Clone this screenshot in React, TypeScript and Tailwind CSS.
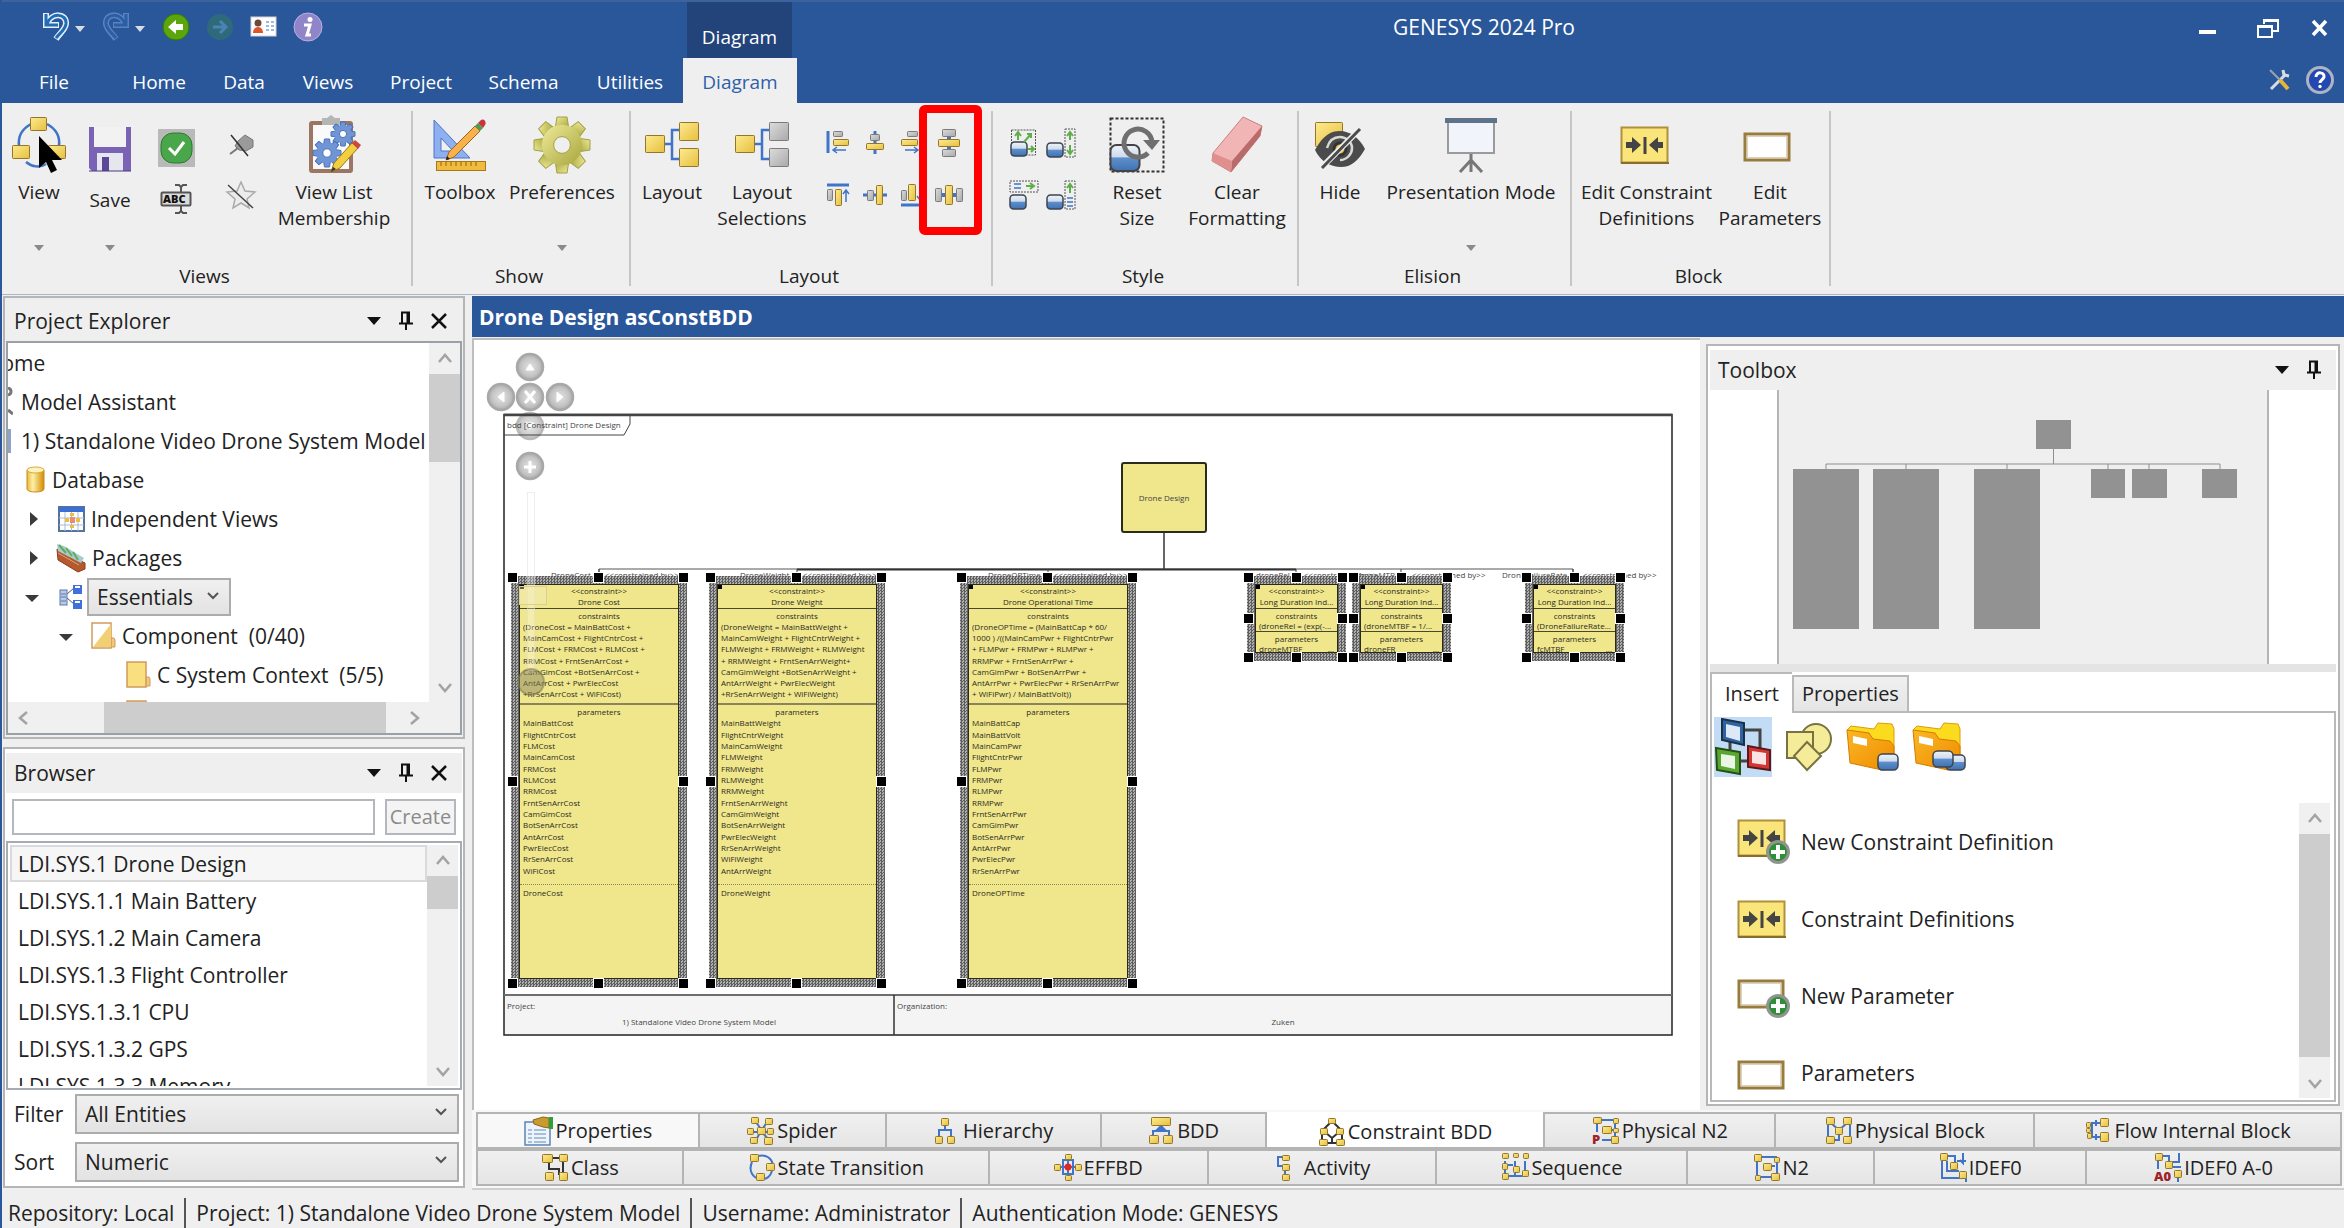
import { FC, ReactNode } from 'react';

interface BoxProps {
  x: number;
  y: number;
  w?: number;
  h?: number;
  gray?: boolean;
}

const Box: FC<BoxProps> = ({ x, y, w = 8, h = w, gray }) => (
  <rect
    x={x + 0.5}
    y={y + 0.5}
    width={w - 1}
    height={h - 1}
    rx={0.8}
    fill={gray ? 'url(#silver)' : 'url(#gold)'}
    stroke={gray ? '#7b7b7b' : '#94762a'}
  />
);

interface IconProps {
  w: number;
  h: number;
  children: ReactNode;
}

const Icon: FC<IconProps> = ({ w, h, children }) => (
  <svg width={w} height={h} viewBox={`0 0 ${w} ${h}`} fill="none" aria-hidden="true" className="shrink-0">
    {children}
  </svg>
);

const Gradients = () => (
  <svg width="0" height="0" className="absolute" aria-hidden="true">
    <defs>
      <linearGradient id="gold" x1="0" y1="0" x2="1" y2="1">
        <stop offset="0" stopColor="#fdeb8e" />
        <stop offset="1" stopColor="#e6bf3f" />
      </linearGradient>
      <linearGradient id="silver" x1="0" y1="0" x2="1" y2="1">
        <stop offset="0" stopColor="#dcdcdc" />
        <stop offset="1" stopColor="#a9a9a9" />
      </linearGradient>
      <linearGradient id="drum" x1="0" y1="0" x2="0" y2="1">
        <stop offset="0" stopColor="#eef3f9" />
        <stop offset="0.45" stopColor="#cddcee" />
        <stop offset="0.5" stopColor="#5f8fca" />
        <stop offset="1" stopColor="#3f72b4" />
      </linearGradient>
      <linearGradient id="folder" x1="0" y1="0" x2="1" y2="1">
        <stop offset="0" stopColor="#fbb725" />
        <stop offset="1" stopColor="#ee8c00" />
      </linearGradient>
      <linearGradient id="cylinder">
        <stop offset="0" stopColor="#e9b93c" />
        <stop offset="0.35" stopColor="#fdf0a6" />
        <stop offset="1" stopColor="#d48b00" />
      </linearGradient>
      <linearGradient id="olive" x1="0" y1="0" x2="1" y2="1">
        <stop offset="0" stopColor="#eeea9a" />
        <stop offset="1" stopColor="#a8a63c" />
      </linearGradient>
      <radialGradient id="knob">
        <stop offset="0" stopColor="#e3e3e3" />
        <stop offset="0.7" stopColor="#c4c4c4" />
        <stop offset="1" stopColor="#a9a9a9" />
      </radialGradient>
    </defs>
  </svg>
);

/* ---------- ribbon icons ---------- */

const ViewIcon = () => (
  <Icon w={54} h={58}>
    <path d="M19 8C8 14 6 22 7 30M35 8c11 6 13 14 12 22M14 46c6 5 14 6 20 2" stroke="#3f74c8" strokeWidth="2.5" />
    <Box x={18} y={1} w={17} h={14} />
    <Box x={0} y={29} w={18} h={14} />
    <Box x={36} y={29} w={18} h={14} />
    <path d="M27 20v32l7-6 5 11 6-3-5-10h10z" fill="#000" />
  </Icon>
);

const SaveIcon = () => (
  <Icon w={44} h={46}>
    <path d="M1 1h42v44H4l-3-3z" fill="#7a63b4" />
    <path d="M6 1h32v20H6z" fill="#f2f2f2" />
    <path d="M9 27h26v18H9z" fill="#e6e6ee" />
    <path d="M14 31h7v14h-7z" fill="#5b4698" />
    <path d="M1 45h42" stroke="#4b3a80" />
  </Icon>
);

const CheckIcon = () => (
  <Icon w={37} h={38}>
    <path d="M0 0h37v38H0z" fill="#b9b9b9" />
    <rect x="3" y="4" width="31" height="30" rx="12" fill="#4aa64a" stroke="#2b7a2f" />
    <path d="M11 19l6 6 9-12" stroke="#fff" strokeWidth="3" />
  </Icon>
);

const RenameIcon = () => (
  <Icon w={32} h={30}>
    <rect x="1.5" y="8.5" width="29" height="13" rx="1" fill="#dcdcdc" stroke="#555" strokeWidth="2" />
    <text x="3" y="19" fontSize="11" fontWeight="800" fill="#111" fontFamily="Open Sans, sans-serif">
      ABC
    </text>
    <path d="M15 1h4l2 2 2-2h4M21 3v6M21 22v5M15 29h4l2-2 2 2h4" stroke="#555" strokeWidth="2" />
  </Icon>
);

const UnpinIcon = () => (
  <Icon w={26} h={24}>
    <path d="M10 7l7-6 8 5v7l-7 4-7-1-4-4z" fill="#9a9a9a" stroke="#777" />
    <path d="M10 14l-8 6" stroke="#777" strokeWidth="2" />
    <path d="M3 1l17 21" stroke="#333" strokeWidth="1.5" />
  </Icon>
);

const UnstarIcon = () => (
  <Icon w={32} h={30}>
    <path d="M16 2l4 9 10 1-8 7 2 9-8-5-8 5 2-9-8-7 10-1z" fill="#ececec" stroke="#aaa" strokeWidth="1.5" />
    <path d="M3 5l25 23" stroke="#444" strokeWidth="1.5" />
  </Icon>
);

const gearTeeth = [0, 45, 90, 135, 180, 225, 270, 315];

const Gear: FC<{ cx: number; cy: number; r: number; fill: string; stroke: string; hole: string }> = ({
  cx,
  cy,
  r,
  fill,
  stroke,
  hole,
}) => (
  <g>
    {gearTeeth.map((a) => (
      <path
        key={a}
        transform={`rotate(${a} ${cx} ${cy})`}
        d={`M${cx - r * 0.24} ${cy - r * 0.6}L${cx - r * 0.18} ${cy - r}H${cx + r * 0.18}L${cx + r * 0.24} ${cy - r * 0.6}z`}
        fill={fill}
        stroke={stroke}
      />
    ))}
    <circle cx={cx} cy={cy} r={r * 0.72} fill={fill} />
    <circle cx={cx} cy={cy} r={r * 0.3} fill={hole} stroke={stroke} />
  </g>
);

const ClipboardIcon = () => (
  <Icon w={54} h={60}>
    <rect x="2" y="6" width="44" height="52" rx="3" fill="#9b7763" />
    <path d="M6 10h36v44H6z" fill="#fafafa" />
    <path d="M15 3h5l4-3 4 3h5v7H15z" fill="#b5b5b5" />
    <Gear cx={36} cy={19} r={12} fill="#6f95d6" stroke="#4b72b8" hole="#fff" />
    <Gear cx={20} cy={38} r={14} fill="#6f95d6" stroke="#4b72b8" hole="#fff" />
    <path d="M24 57l3-9 18-20 6 5-18 20z" fill="#f2cf3e" stroke="#96741e" />
    <path d="M45 28l3-3 6 5-3 4z" fill="#c9483f" />
    <path d="M24 57l2-5 3 2z" fill="#333" />
  </Icon>
);

const ToolboxIcon = () => (
  <Icon w={54} h={52}>
    <path d="M1 1l36 38H1zM8 19v13h12z" fill="#8fb0f0" fillRule="evenodd" stroke="#4d74c8" />
    <rect x="3.5" y="42.5" width="49" height="9" fill="#f1bb3e" stroke="#a57818" />
    <path d="M8 43v4m5-4v4m5-4v4m5-4v4m5-4v4m5-4v4m5-4v4m5-4v4" stroke="#8c6515" />
    <path d="M13 41l3-8L42 7l5 5-26 26z" fill="#f7b24c" stroke="#a0641a" />
    <path d="M42 7l3-3 5 5-3 3z" fill="#46a05a" />
    <path d="M45 4l3-3c3-2 6 2 4 5l-2 3z" fill="#c8343a" />
    <path d="M13 41l1-4 3 3z" fill="#222" />
  </Icon>
);

const PreferencesIcon = () => (
  <Icon w={58} h={60}>
    <Gear cx={29} cy={30} r={28} fill="url(#olive)" stroke="#a3a142" hole="#efefef" />
  </Icon>
);

const LayoutIcon: FC<{ gray?: boolean }> = ({ gray }) => (
  <Icon w={56} h={48}>
    <path d="M18 23h10M39 9H28v29h11" stroke="#3f74c8" strokeWidth="2.5" />
    <Box x={1} y={14} w={20} h={18} />
    <Box x={35} y={1} w={20} h={19} gray={gray} />
    <Box x={35} y={27} w={20} h={19} gray={gray} />
  </Icon>
);

const AlignLeftIcon = () => (
  <Icon w={24} h={26}>
    <path d="M2 1v22" stroke="#3f74c8" strokeWidth="3" />
    <Box x={7} y={1} w={10} h={6} gray />
    <Box x={7} y={9} w={16} h={7} />
    <path d="M20 20H8m3-3l-4 3 4 3" stroke="#3f74c8" strokeWidth="1.5" />
  </Icon>
);

const AlignCenterIcon = () => (
  <Icon w={24} h={26}>
    <path d="M12 1v23" stroke="#3f74c8" strokeWidth="3" />
    <Box x={7} y={4} w={10} h={7} gray />
    <Box x={3} y={13} w={18} h={7} />
  </Icon>
);

const AlignRightIcon = () => (
  <Icon w={24} h={26}>
    <path d="M21 1v22" stroke="#3f74c8" strokeWidth="3" />
    <Box x={7} y={1} w={11} h={6} gray />
    <Box x={1} y={9} w={17} h={7} />
    <path d="M5 20h12m-3-3l4 3-4 3" stroke="#3f74c8" strokeWidth="1.5" />
  </Icon>
);

const SpreadVerticalIcon = () => (
  <Icon w={24} h={30}>
    <path d="M12 6v18" stroke="#3f74c8" strokeWidth="4" />
    <Box x={5} y={1} w={14} h={8} gray />
    <Box x={1} y={11} w={22} h={8} />
    <Box x={5} y={21} w={14} h={8} gray />
  </Icon>
);

const AlignTopIcon = () => (
  <Icon w={24} h={26}>
    <path d="M1 3h22" stroke="#3f74c8" strokeWidth="3" />
    <Box x={1} y={7} w={6} h={12} gray />
    <Box x={9} y={7} w={7} h={17} />
    <path d="M20 20V9m-3 3l3-4 3 4" stroke="#3f74c8" strokeWidth="1.5" />
  </Icon>
);

const AlignMiddleIcon = () => (
  <Icon w={24} h={26}>
    <path d="M0 13h24" stroke="#3f74c8" strokeWidth="3" />
    <Box x={4} y={8} w={7} h={11} gray />
    <Box x={13} y={3} w={7} h={20} />
  </Icon>
);

const AlignBottomIcon = () => (
  <Icon w={24} h={26}>
    <path d="M1 23h22" stroke="#3f74c8" strokeWidth="3" />
    <Box x={1} y={8} w={6} h={11} gray />
    <Box x={8} y={2} w={8} h={17} />
    <path d="M20 6v11m-3-3l3 4 3-4" stroke="#3f74c8" strokeWidth="1.5" />
  </Icon>
);

const SpreadHorizontalIcon = () => (
  <Icon w={30} h={26}>
    <path d="M6 13h18" stroke="#3f74c8" strokeWidth="4" />
    <Box x={1} y={6} w={7} h={14} gray />
    <Box x={11} y={3} w={8} h={20} />
    <Box x={22} y={6} w={7} h={14} gray />
  </Icon>
);

const Drum: FC<{ x: number; y: number; w?: number; h?: number }> = ({ x, y, w = 16, h = 14 }) => (
  <rect x={x} y={y} width={w} height={h} rx={w * 0.22} fill="url(#drum)" stroke="#3c4450" strokeWidth="1.5" />
);

const SizeBothIcon = () => (
  <Icon w={28} h={30}>
    <rect x="1.5" y="2" width="24" height="25" stroke="#555" strokeDasharray="2 1" />
    <Drum x={1} y={14} />
    <path d="M8 12V5m-3 3l3-4 3 4M14 14l7-8m-4 0h4v4M18 21h5m-2-3l3 3-3 3" stroke="#5fae4a" strokeWidth="2" />
  </Icon>
);

const SizeTallIcon = () => (
  <Icon w={30} h={30}>
    <rect x="19" y="1" width="10" height="28" stroke="#555" strokeDasharray="2 1" />
    <Drum x={1} y={15} />
    <path d="M24 12V5m-3 3l3-4 3 4M24 17v8m-3-3l3 4 3-4" stroke="#5fae4a" strokeWidth="2" />
  </Icon>
);

const SizeWideIcon = () => (
  <Icon w={30} h={30}>
    <rect x="1" y="1" width="28" height="11" stroke="#555" strokeDasharray="2 1" />
    <Drum x={1} y={15} />
    <path d="M17 6h7m-3-3l4 3-4 3" stroke="#5fae4a" strokeWidth="2" />
    <path d="M5 4h7M5 8h7" stroke="#3f74c8" strokeWidth="1.5" />
  </Icon>
);

const SizeMatchIcon = () => (
  <Icon w={30} h={30}>
    <rect x="19" y="1" width="10" height="28" stroke="#555" strokeDasharray="2 1" />
    <Drum x={1} y={15} />
    <path d="M24 13V5m-3 3l3-4 3 4" stroke="#5fae4a" strokeWidth="2" />
    <path d="M21 18h6M21 22h6M21 26h6" stroke="#3f74c8" strokeWidth="1.5" />
  </Icon>
);

const ResetSizeIcon = () => (
  <Icon w={56} h={56}>
    <rect x="1.5" y="1.5" width="53" height="53" stroke="#333" strokeDasharray="3 2" strokeWidth="2" />
    <rect x="1.5" y="28" width="29" height="26" rx="6" fill="url(#drum)" stroke="#444" strokeWidth="2" />
    <path d="M39 36a14 14 0 1 1 4-11" stroke="#6f6f6f" strokeWidth="5" />
    <path d="M34 23h17l-8 10z" fill="#6f6f6f" />
  </Icon>
);

const EraserIcon = () => (
  <Icon w={56} h={60}>
    <path d="M34 2l19 9-2 10L22 57 3 46l1-8z" fill="#f2b5b5" stroke="#c98080" />
    <path d="M53 11l-2 10-29 36 1-11z" fill="#b96a6a" />
    <path d="M4 38l19 8-1 11L3 46z" fill="#e08f8f" />
  </Icon>
);

const HideIcon = () => (
  <Icon w={52} h={48}>
    <Box x={1} y={1} w={28} h={25} />
    <path d="M1 29C9 14 17 10 26 10s19 6 25 18c-7 12-14 18-24 18S7 41 1 29z" fill="#4b4b4b" />
    <path d="M13 27c2-7 7-11 13-11s12 5 12 11-5 12-12 12" stroke="#d8d8d8" strokeWidth="2.5" />
    <circle cx="26" cy="28" r="6" fill="#e0b93c" stroke="#333" strokeWidth="3" />
    <path d="M46 8L8 46" stroke="#efefef" strokeWidth="6" />
    <path d="M46 8L8 47" stroke="#4b4b4b" strokeWidth="3" />
  </Icon>
);

const ProjectorIcon = () => (
  <Icon w={52} h={56}>
    <path d="M3 5h46v31H3z" fill="#f1f4fb" stroke="#9a9a9a" strokeWidth="2" />
    <path d="M0 1h52v5H0z" fill="#5c7389" />
    <path d="M26 37v18M26 43L15 55M26 43l11 12" stroke="#777" strokeWidth="3" />
  </Icon>
);

const PlusBadge = () => (
  <g>
    <circle cx="41" cy="33" r="12" fill="#8f958e" />
    <circle cx="41" cy="33" r="9" fill="#2f8f37" />
    <path d="M41 26v14M34 33h14" stroke="#fff" strokeWidth="4" />
  </g>
);

const ConstraintIcon: FC<{ add?: boolean }> = ({ add }) => (
  <Icon w={54} h={add ? 46 : 38}>
    <rect x="1.5" y="1.5" width="46" height="35" fill="#fae57a" stroke="#b0903c" strokeWidth="2" />
    <path d="M1 37h48" stroke="#8a6d2a" strokeWidth="2" />
    <path d="M6 16h6v-5l9 8-9 8v-5H6zM43 16h-5v-5l-9 8 9 8v-5h5zM23.5 11h3v17h-3z" fill="#444" />
    {add && <PlusBadge />}
  </Icon>
);

const ParameterIcon: FC<{ add?: boolean }> = ({ add }) => (
  <Icon w={54} h={add ? 46 : 38}>
    <rect x="2" y="8" width="44" height="26" fill="#fff" stroke="#987c3e" strokeWidth="3" />
    <rect x="4.5" y="10.5" width="39" height="21" stroke="#ddd3bc" />
    {add && <PlusBadge />}
  </Icon>
);

/* ---------- ribbon ---------- */

const SmallCaret: FC<{ className?: string }> = ({ className = 'text-[#8a8a8a]' }) => (
  <svg width="10" height="6" viewBox="0 0 10 6" aria-hidden="true" className={className}>
    <path d="M0 0h10L5 6z" fill="currentColor" />
  </svg>
);

interface RibbonButtonProps {
  icon: ReactNode;
  label: ReactNode;
  className: string;
  low?: boolean;
  menu?: boolean;
}

const RibbonButton: FC<RibbonButtonProps> = ({ icon, label, className, low, menu }) => (
  <button className={`flex h-40 shrink-0 flex-col items-center ${className}`}>
    <span className={`flex w-full shrink-0 items-center justify-center ${low ? 'h-[76px]' : 'h-[68px]'}`}>{icon}</span>
    <span className="whitespace-nowrap text-center leading-[26px]">{label}</span>
    {menu && (
      <span className="mt-auto pb-5">
        <SmallCaret />
      </span>
    )}
  </button>
);

interface RibbonGroupProps {
  title: string;
  className: string;
  inset?: string;
  children: ReactNode;
}

const RibbonGroup: FC<RibbonGroupProps> = ({ title, className, inset = 'pl-1', children }) => (
  <section className={`flex shrink-0 flex-col border-r-2 border-[#c6c6c6] ${className}`}>
    <div className={`flex h-[152px] ${inset}`}>{children}</div>
    <h2 className="pr-1 text-center leading-[26px]">{title}</h2>
  </section>
);

const IconButton: FC<{ label: string; className: string; children: ReactNode }> = ({ label, className, children }) => (
  <button aria-label={label} className={`flex items-center justify-center ${className}`}>
    {children}
  </button>
);

const Ribbon = () => (
  <div className="flex h-[192px] shrink-0 overflow-hidden border-b border-[#a9b6cc] bg-[#efefef] py-2 text-[19px]">
    <RibbonGroup title="Views" className="w-[411px]" inset="pl-0">
      <RibbonButton icon={<ViewIcon />} label="View" className="w-[74px]" menu />
      <RibbonButton icon={<SaveIcon />} label="Save" className="w-[68px]" low menu />
      <div className="flex w-[64px] flex-col gap-4 pt-[18px]">
        <IconButton label="Validate" className="h-[38px]">
          <CheckIcon />
        </IconButton>
        <IconButton label="Rename" className="h-8">
          <RenameIcon />
        </IconButton>
      </div>
      <div className="flex w-[66px] flex-col gap-4 pt-[18px]">
        <IconButton label="Unpin" className="h-[34px]">
          <UnpinIcon />
        </IconButton>
        <IconButton label="Remove favorite" className="h-8">
          <UnstarIcon />
        </IconButton>
      </div>
      <RibbonButton
        icon={<ClipboardIcon />}
        label={
          <>
            View List
            <br />
            Membership
          </>
        }
        className="w-[120px]"
      />
    </RibbonGroup>
    <RibbonGroup title="Show" className="w-[218px]">
      <RibbonButton icon={<ToolboxIcon />} label="Toolbox" className="w-[86px]" />
      <RibbonButton icon={<PreferencesIcon />} label="Preferences" className="w-[118px]" menu />
    </RibbonGroup>
    <RibbonGroup title="Layout" className="w-[362px]">
      <RibbonButton icon={<LayoutIcon />} label="Layout" className="w-[74px]" />
      <RibbonButton
        icon={<LayoutIcon gray />}
        label={
          <>
            Layout
            <br />
            Selections
          </>
        }
        className="w-[106px]"
      />
      <div className="relative grid h-[108px] grid-cols-[37px_37px_37px_37px] grid-rows-2 gap-y-1 pl-1 pt-2">
        <IconButton label="Align left" className="h-12">
          <AlignLeftIcon />
        </IconButton>
        <IconButton label="Align center" className="h-12">
          <AlignCenterIcon />
        </IconButton>
        <IconButton label="Align right" className="h-12">
          <AlignRightIcon />
        </IconButton>
        <IconButton label="Space evenly down" className="h-12">
          <SpreadVerticalIcon />
        </IconButton>
        <IconButton label="Align top" className="h-12">
          <AlignTopIcon />
        </IconButton>
        <IconButton label="Align middle" className="h-12">
          <AlignMiddleIcon />
        </IconButton>
        <IconButton label="Align bottom" className="h-12">
          <AlignBottomIcon />
        </IconButton>
        <IconButton label="Space evenly across" className="h-12">
          <SpreadHorizontalIcon />
        </IconButton>
        <div className="pointer-events-none absolute -top-1.5 left-[104px] h-[130px] w-[63px] rounded-md border-8 border-[#ff0000]" />
      </div>
    </RibbonGroup>
    <RibbonGroup title="Style" className="w-[306px]" inset="pl-3">
      <div className="mr-2 grid h-[108px] grid-cols-[37px_37px] grid-rows-2 gap-y-1 pt-2">
        <IconButton label="Grow" className="h-12">
          <SizeBothIcon />
        </IconButton>
        <IconButton label="Grow height" className="h-12">
          <SizeTallIcon />
        </IconButton>
        <IconButton label="Same width" className="h-12">
          <SizeWideIcon />
        </IconButton>
        <IconButton label="Same height" className="h-12">
          <SizeMatchIcon />
        </IconButton>
      </div>
      <RibbonButton
        icon={<ResetSizeIcon />}
        label={
          <>
            Reset
            <br />
            Size
          </>
        }
        className="w-[100px]"
      />
      <RibbonButton
        icon={<EraserIcon />}
        label={
          <>
            Clear
            <br />
            Formatting
          </>
        }
        className="w-[100px]"
      />
    </RibbonGroup>
    <RibbonGroup title="Elision" className="w-[273px]">
      <RibbonButton icon={<HideIcon />} label="Hide" className="w-[74px]" />
      <RibbonButton icon={<ProjectorIcon />} label="Presentation Mode" className="w-[188px]" menu />
    </RibbonGroup>
    <RibbonGroup title="Block" className="w-[259px]">
      <RibbonButton
        icon={<ConstraintIcon />}
        label={
          <>
            Edit Constraint
            <br />
            Definitions
          </>
        }
        className="w-[141px]"
      />
      <RibbonButton
        icon={<ParameterIcon />}
        label={
          <>
            Edit
            <br />
            Parameters
          </>
        }
        className="w-[106px]"
      />
    </RibbonGroup>
  </div>
);

/* ---------- title bar ---------- */

const UndoIcon = () => (
  <Icon w={28} h={30}>
    <path d="M4 1v12h13M5 12C9 0 25 1 24 12c-1 6-6 9-10 15" stroke="#e4edf8" strokeWidth="6" />
    <path d="M4 2v11h12M5 12C9 0 25 1 24 12c-1 6-6 9-10 14" stroke="#1f6db4" strokeWidth="3" />
  </Icon>
);

const RedoIcon = () => (
  <Icon w={28} h={30}>
    <path d="M24 1v12H11M23 12C19 0 3 1 4 12c1 6 6 9 10 15" stroke="#5b82bd" strokeWidth="6" />
    <path d="M24 2v11H12M23 12C19 0 3 1 4 12c1 6 6 9 10 14" stroke="#2a5ea6" strokeWidth="3" />
  </Icon>
);

const BackIcon = () => (
  <Icon w={28} h={28}>
    <circle cx="14" cy="14" r="13" fill="#5ba50d" stroke="#36790a" />
    <path d="M14 7v4h7v6h-7v4l-8-7z" fill="#fff" />
  </Icon>
);

const ForwardIcon = () => (
  <Icon w={28} h={28}>
    <circle cx="14" cy="14" r="13" fill="#2f6a7c" />
    <path d="M7 14h12m-5-6l6 6-6 6" stroke="#4b83b4" strokeWidth="3" />
  </Icon>
);

const ContactIcon = () => (
  <Icon w={28} h={22}>
    <rect x="1" y="1" width="25" height="19" fill="#fff" stroke="#d3d3d3" />
    <circle cx="8" cy="7" r="3.5" fill="#6b4a3c" />
    <path d="M3 17c0-8 10-8 10 0z" fill="#e0542c" />
    <path d="M16 6h3m2 0h3m-8 4h3m2 0h3m-8 4h3m2 0h3" stroke="#7fa3d6" strokeWidth="1.5" />
  </Icon>
);

const InfoIcon = () => (
  <Icon w={30} h={30}>
    <circle cx="15" cy="15" r="14" fill="#9085c8" stroke="#b9b0e2" />
    <circle cx="17" cy="7.5" r="2.5" fill="#fff" />
    <path d="M11 13h6l-3 10h4" stroke="#fff" strokeWidth="3" />
  </Icon>
);

const ToolsIcon = () => (
  <Icon w={24} h={24}>
    <path d="M3 21L18 6" stroke="#d9dde2" strokeWidth="3" />
    <path d="M15 2l1 5 5 1" stroke="#d9dde2" strokeWidth="3" />
    <path d="M2 2l10 10" stroke="#9aa3ad" strokeWidth="2" />
    <path d="M12 12l8 9" stroke="#e6b53a" strokeWidth="4" />
  </Icon>
);

const HelpIcon = () => (
  <Icon w={28} h={28}>
    <circle cx="14" cy="14" r="12.5" fill="#2348b0" stroke="#aeb4c2" strokeWidth="3" />
    <path d="M10 11c0-6 9-5 8 0-1 3-4 3-4 6" stroke="#fff" strokeWidth="3" />
    <circle cx="14" cy="20.5" r="1.7" fill="#fff" />
  </Icon>
);

const ribbonTabs = [
  { name: 'File', width: 'w-[94px] pr-[26px]' },
  { name: 'Home', width: 'w-[90px]' },
  { name: 'Data', width: 'w-[80px]' },
  { name: 'Views', width: 'w-[88px]' },
  { name: 'Project', width: 'w-[98px]' },
  { name: 'Schema', width: 'w-[107px]' },
  { name: 'Utilities', width: 'w-[106px]' },
];

const TitleBar = () => (
  <header className="shrink-0 border-t-2 border-[#3c639c] bg-[#2a579a] text-[19px] text-white">
    <div className="flex h-14">
      <div className="flex w-[685px] items-start pl-[38px] pt-2.5">
        <IconButton label="Undo" className="h-[30px] w-8">
          <UndoIcon />
        </IconButton>
        <IconButton label="Undo history" className="h-[30px] w-4">
          <SmallCaret className="mt-1 text-[#d7dce4]" />
        </IconButton>
        <IconButton label="Redo" className="ml-3 h-[30px] w-8">
          <RedoIcon />
        </IconButton>
        <IconButton label="Redo history" className="h-[30px] w-4">
          <SmallCaret className="mt-1 text-[#d7dce4]" />
        </IconButton>
        <IconButton label="Back" className="ml-2.5 h-[30px] w-9">
          <BackIcon />
        </IconButton>
        <IconButton label="Forward" className="ml-2 h-[30px] w-9">
          <ForwardIcon />
        </IconButton>
        <IconButton label="Contact" className="ml-2 h-[30px] w-9">
          <ContactIcon />
        </IconButton>
        <IconButton label="About" className="ml-2 h-[30px] w-9">
          <InfoIcon />
        </IconButton>
      </div>
      <div className="flex w-[105px] items-center justify-center bg-[#22447a] pt-3.5">Diagram</div>
      <h1 className="flex-1 pt-3 text-center text-[21px] leading-[26px]">GENESYS 2024 Pro</h1>
      <div className="flex w-[168px] items-start justify-end gap-3 pr-2 pt-2.5">
        <IconButton label="Minimize" className="h-8 w-12">
          <Icon w={18} h={18}>
            <path d="M0 13h17" stroke="#fff" strokeWidth="4" />
          </Icon>
        </IconButton>
        <IconButton label="Restore" className="h-8 w-12">
          <Icon w={24} h={20}>
            <path d="M8 6V2h14v11h-5M8 3h14" stroke="#fff" strokeWidth="2" />
            <path d="M2 8h14v11H2zM2 9h14" stroke="#fff" strokeWidth="2" />
          </Icon>
        </IconButton>
        <IconButton label="Close" className="h-8 w-8">
          <Icon w={18} h={18}>
            <path d="M2 2l13 14M15 2L2 16" stroke="#fff" strokeWidth="3.5" />
          </Icon>
        </IconButton>
      </div>
    </div>
    <nav className="flex h-[45px] items-stretch pl-[18px] [&>button]:pt-0.5">
      {ribbonTabs.map((tab) => (
        <button key={tab.name} className={tab.width}>
          {tab.name}
        </button>
      ))}
      <button className="w-[114px] bg-[#efefef] text-[#2f5fa8]">Diagram</button>
      <div className="ml-auto flex items-start gap-3 pr-2.5 pt-2">
        <IconButton label="Tools" className="h-7 w-7">
          <ToolsIcon />
        </IconButton>
        <IconButton label="Help" className="h-7 w-7">
          <HelpIcon />
        </IconButton>
      </div>
    </nav>
  </header>
);

/* ---------- shared panel parts ---------- */

const PinIcon = () => (
  <Icon w={14} h={20}>
    <path d="M3 12V1.5h7V12M0 12.5h14M7 13v6" stroke="#111" strokeWidth="2" />
    <path d="M9 2v10" stroke="#111" strokeWidth="3" />
  </Icon>
);

const PanelHeader: FC<{ title: string; closable?: boolean }> = ({ title, closable }) => (
  <div className="flex h-10 shrink-0 items-center bg-[#efefef] pl-2 pr-1.5">
    <h2 className="flex-1">{title}</h2>
    <IconButton label={`${title} menu`} className="h-8 w-8">
      <svg width="14" height="8" viewBox="0 0 14 8" aria-hidden="true">
        <path d="M0 0h14L7 8z" fill="#111" />
      </svg>
    </IconButton>
    <IconButton label={`Pin ${title}`} className="h-8 w-8">
      <PinIcon />
    </IconButton>
    {closable && (
      <IconButton label={`Close ${title}`} className="h-8 w-[34px]">
        <Icon w={16} h={16}>
          <path d="M1 1l14 14M15 1L1 15" stroke="#111" strokeWidth="2.5" />
        </Icon>
      </IconButton>
    )}
  </div>
);

const chevrons = {
  up: 'M2 11l6-7 6 7',
  down: 'M2 5l6 7 6-7',
  left: 'M11 2L4 8l7 6',
  right: 'M5 2l7 6-7 6',
};

const Chevron: FC<{ dir: keyof typeof chevrons }> = ({ dir }) => (
  <Icon w={16} h={16}>
    <path d={chevrons[dir]} stroke="#a3a3a3" strokeWidth="2.5" />
  </Icon>
);

const VerticalScroll: FC<{ thumb: string }> = ({ thumb }) => (
  <div className="flex w-[31px] shrink-0 flex-col bg-[#f0f0f0]">
    <IconButton label="Scroll up" className="h-[31px] w-full">
      <Chevron dir="up" />
    </IconButton>
    <div className="flex-1">
      <div className={`w-full bg-[#cdcdcd] ${thumb}`} />
    </div>
    <IconButton label="Scroll down" className="h-[31px] w-full">
      <Chevron dir="down" />
    </IconButton>
  </div>
);

interface DropdownProps {
  id: string;
  value: string;
  className: string;
}

const Dropdown: FC<DropdownProps> = ({ id, value, className }) => (
  <div className={`relative ${className}`}>
    <select
      id={id}
      aria-label={value}
      className="h-full w-full appearance-none border-2 border-[#acacac] bg-linear-to-b from-[#f0f0f0] to-[#e3e3e3] pl-2"
    >
      <option>{value}</option>
    </select>
    <svg width="12" height="8" viewBox="0 0 12 8" fill="none" aria-hidden="true" className="pointer-events-none absolute right-3 top-3.5">
      <path d="M1 1l5 5 5-5" stroke="#555" strokeWidth="2" />
    </svg>
  </div>
);

/* ---------- project explorer ---------- */

const Twisty: FC<{ open?: boolean }> = ({ open }) => (
  <svg width="14" height="14" viewBox="0 0 14 14" aria-hidden="true" className="shrink-0">
    <path d={open ? 'M0 5h14l-7 7z' : 'M4 0l8 7-8 7z'} fill="#3a3a3a" />
  </svg>
);

const DatabaseIcon = () => (
  <Icon w={20} h={28}>
    <path d="M1 4v19c0 4 17 4 17 0V4z" fill="url(#cylinder)" stroke="#c58a1d" />
    <ellipse cx="9.5" cy="4" rx="8.5" ry="3" fill="#fbf3bd" stroke="#d9a93a" />
  </Icon>
);

const IndependentIcon = () => (
  <Icon w={27} h={26}>
    <rect x="1" y="1" width="25" height="24" fill="#fff" stroke="#56729e" strokeWidth="2" />
    <path d="M1 1h25v5H1z" fill="#3d6fd0" />
    <path d="M1 12h25M1 19h25M7 6v19M13.5 6v19M20 6v19" stroke="#a9bbd6" />
    <path d="M12 11h5v6h-5z" fill="#ee8a74" />
    <path d="M7 12h4v4H7zM18 12h4v4h-4zM12 7h4v3h-4zM12 19h4v3h-4z" fill="#e8be45" />
  </Icon>
);

const PackagesIcon = () => (
  <Icon w={30} h={30}>
    <path d="M1 6l24 12 4 2v6l-7 3L2 17z" fill="#b45a2c" stroke="#8a3f1d" />
    <path d="M1 1l7 2 20 12-3 5L2 8z" fill="#a9cbd0" />
    <path d="M3 2l7 8M10 5l6 8M17 9l5 8" stroke="#5fae58" strokeWidth="2" />
    <path d="M2 10l21 12" stroke="#e3a079" />
  </Icon>
);

const EssentialsIcon = () => (
  <Icon w={24} h={26}>
    <path d="M8 10l7-6M8 14l7 6" stroke="#555" />
    <rect x="1" y="6" width="7" height="15" fill="#b9c9e6" stroke="#5a79ae" />
    <path d="M2 10h5M2 13h5M2 17h5" stroke="#5a79ae" />
    <rect x="14" y="1" width="9" height="9" fill="#3f70dc" />
    <rect x="14" y="16" width="9" height="9" fill="#3f70dc" />
    <path d="M16 3h5M16 18h5" stroke="#fff" strokeWidth="2" />
  </Icon>
);

const FolderIcon: FC<{ half?: boolean }> = ({ half }) => (
  <Icon w={25} h={28}>
    <path d="M19 16h4l1 2v7h-5z" fill="#f2c979" stroke="#d09a5c" />
    <rect x="1" y="1" width="19" height="25" fill={half ? '#fff' : '#fadf80'} stroke="#cf9a5c" strokeWidth="1.5" />
    {half && <path d="M20 2v23H2z" fill="#f3cf74" />}
  </Icon>
);

const ProjectExplorer = () => (
  <section className="flex min-h-0 flex-1 flex-col border-2 border-[#b5b5b5] bg-[#efefef] px-px pb-0.5">
    <div className="flex h-[43px] flex-col justify-end">
      <PanelHeader title="Project Explorer" closable />
    </div>
    <div className="flex min-h-0 flex-1 flex-col border-2 border-[#9aa0a8] bg-white">
      <div className="flex min-h-0 flex-1">
        <ul className="min-w-0 flex-1 overflow-hidden whitespace-nowrap [&>li]:flex [&>li]:h-[39px] [&>li]:items-center">
          <li className="-ml-[22px]">Home</li>
          <li>
            <span className="mr-2 w-[5px] overflow-hidden">
              <svg width="5" height="30" viewBox="0 0 5 30" fill="none" aria-hidden="true">
                <path d="M0 1c4 1 4 6 0 7M0 23l5 4" stroke="#777" strokeWidth="3" />
              </svg>
            </span>
            Model Assistant
          </li>
          <li>
            <span className="mr-2.5 h-6 w-[3px] bg-[#8da3c8]" />
            1) Standalone Video Drone System Model
          </li>
          <li className="gap-1.5 pl-[18px]">
            <DatabaseIcon /> Database
          </li>
          <li className="pl-[18px]">
            <Twisty />
            <span className="ml-[18px] mr-1.5">
              <IndependentIcon />
            </span>
            Independent Views
          </li>
          <li className="pl-[18px]">
            <Twisty />
            <span className="ml-4 mr-1.5">
              <PackagesIcon />
            </span>
            Packages
          </li>
          <li className="pl-[17px]">
            <Twisty open />
            <span className="ml-5 mr-1">
              <EssentialsIcon />
            </span>
            <Dropdown id="facility" value="Essentials" className="h-[38px] w-[144px]" />
          </li>
          <li className="gap-1.5 whitespace-pre pl-[51px]">
            <Twisty open />
            <span className="ml-3">
              <FolderIcon half />
            </span>
            {'Component  (0/40)'}
          </li>
          <li className="gap-1.5 whitespace-pre pl-[118px]">
            <FolderIcon />
            {'C System Context  (5/5)'}
          </li>
          <li className="pl-[118px]">
            <FolderIcon />
          </li>
        </ul>
        <VerticalScroll thumb="h-[88px]" />
      </div>
      <div className="flex h-[31px] shrink-0 bg-[#f0f0f0] pr-[31px]">
        <IconButton label="Scroll left" className="w-[31px]">
          <Chevron dir="left" />
        </IconButton>
        <div className="flex flex-1 justify-end">
          <div className="mr-3 w-[282px] bg-[#cdcdcd]" />
        </div>
        <IconButton label="Scroll right" className="w-[31px]">
          <Chevron dir="right" />
        </IconButton>
      </div>
    </div>
  </section>
);

/* ---------- browser ---------- */

const entities = [
  'LDI.SYS.1 Drone Design',
  'LDI.SYS.1.1 Main Battery',
  'LDI.SYS.1.2 Main Camera',
  'LDI.SYS.1.3 Flight Controller',
  'LDI.SYS.1.3.1 CPU',
  'LDI.SYS.1.3.2 GPS',
  'LDI.SYS.1.3.3 Memory',
];

const Browser = () => (
  <section className="flex min-h-0 flex-1 flex-col border-2 border-[#b5b5b5] bg-white px-px">
    <div className="flex h-11 flex-col justify-end">
      <PanelHeader title="Browser" closable />
    </div>
    <div className="flex gap-2.5 px-1.5 py-1.5">
      <input type="text" aria-label="Entity name" className="h-9 min-w-0 flex-1 border-2 border-[#b4b7bd] bg-white px-2" />
      <button disabled className="h-9 w-[71px] border-2 border-[#b4b7bd] bg-[#f4f4f4] text-[20px] text-[#8b8b8b]">
        Create
      </button>
    </div>
    <div className="flex min-h-0 flex-1 border-2 border-[#a7abb3] p-0.5">
      <ul className="min-w-0 flex-1 overflow-hidden">
        {entities.map((entity, i) => (
          <li
            key={entity}
            className={`flex h-[37px] items-center border-2 pl-1.5 ${i === 0 ? 'border-[#dadada] bg-[#f6f6f6]' : 'border-transparent'}`}
          >
            {entity}
          </li>
        ))}
      </ul>
      <VerticalScroll thumb="h-[33px]" />
    </div>
    <div className="flex items-center pb-2 pl-2 pr-[3px] pt-1">
      <label htmlFor="filter" className="w-[61px]">
        Filter
      </label>
      <Dropdown id="filter" value="All Entities" className="h-10 flex-1" />
    </div>
    <div className="flex items-center pb-1 pl-2 pr-[3px]">
      <label htmlFor="sort" className="w-[61px]">
        Sort
      </label>
      <Dropdown id="sort" value="Numeric" className="h-10 flex-1" />
    </div>
  </section>
);

/* ---------- diagram canvas ---------- */

interface ConstraintNode {
  x: number;
  name: string;
  constraints: string[];
  parameters: string[];
  result?: string;
}

const nodes: ConstraintNode[] = [
  {
    x: 37,
    name: 'Drone Cost',
    constraints: [
      '(DroneCost = MainBattCost +',
      'MainCamCost + FlightCntrCost +',
      'FLMCost + FRMCost + RLMCost +',
      'RRMCost + FrntSenArrCost +',
      'CamGimCost +BotSenArrCost +',
      'AntArrCost + PwrElecCost',
      '+RrSenArrCost + WiFiCost)',
    ],
    parameters: [
      'MainBattCost',
      'FlightCntrCost',
      'FLMCost',
      'MainCamCost',
      'FRMCost',
      'RLMCost',
      'RRMCost',
      'FrntSenArrCost',
      'CamGimCost',
      'BotSenArrCost',
      'AntArrCost',
      'PwrElecCost',
      'RrSenArrCost',
      'WiFiCost',
    ],
    result: 'DroneCost',
  },
  {
    x: 235,
    name: 'Drone Weight',
    constraints: [
      '(DroneWeight = MainBattWeight +',
      'MainCamWeight + FlightCntrWeight +',
      'FLMWeight + FRMWeight + RLMWeight',
      '+ RRMWeight + FrntSenArrWeight+',
      'CamGimWeight +BotSenArrWeight +',
      'AntArrWeight + PwrElecWeight',
      '+RrSenArrWeight + WiFiWeight)',
    ],
    parameters: [
      'MainBattWeight',
      'FlightCntrWeight',
      'MainCamWeight',
      'FLMWeight',
      'FRMWeight',
      'RLMWeight',
      'RRMWeight',
      'FrntSenArrWeight',
      'CamGimWeight',
      'BotSenArrWeight',
      'PwrElecWeight',
      'RrSenArrWeight',
      'WiFiWeight',
      'AntArrWeight',
    ],
    result: 'DroneWeight',
  },
  {
    x: 486,
    name: 'Drone Operational Time',
    constraints: [
      '(DroneOPTime = (MainBattCap * 60/',
      '1000 ) /((MainCamPwr + FlightCntrPwr',
      '+ FLMPwr + FRMPwr + RLMPwr +',
      'RRMPwr + FrntSenArrPwr +',
      'CamGimPwr + BotSenArrPwr +',
      'AntArrPwr + PwrElecPwr + RrSenArrPwr',
      '+ WiFiPwr) / MainBattVolt))',
    ],
    parameters: [
      'MainBattCap',
      'MainBattVolt',
      'MainCamPwr',
      'FlightCntrPwr',
      'FLMPwr',
      'FRMPwr',
      'RLMPwr',
      'RRMPwr',
      'FrntSenArrPwr',
      'CamGimPwr',
      'BotSenArrPwr',
      'AntArrPwr',
      'PwrElecPwr',
      'RrSenArrPwr',
    ],
    result: 'DroneOPTime',
  },
  { x: 773, name: 'Long Duration Ind...', constraints: ['(droneRel = (exp(-...'], parameters: ['droneMTBF'] },
  { x: 878, name: 'Long Duration Ind...', constraints: ['(droneMTBF = 1/...'], parameters: ['droneFR'] },
  { x: 1051, name: 'Long Duration Ind...', constraints: ['(DroneFailureRate...'], parameters: ['fcMTBF'] },
];

const links = [
  { x: 125, name: 'DroneCost', nameX: 77, labelX: 131 },
  { x: 323, name: 'DroneWeight', nameX: 266, labelX: 329 },
  { x: 574, name: 'DroneOPTime', nameX: 514, labelX: 580 },
  { x: 822, name: 'droneRel', nameX: 782, labelX: 830 },
  { x: 927, name: 'droneMTBF', nameX: 882, labelX: 938 },
  { x: 1099, name: 'DroneFailureRate', nameX: 1028, labelX: 1109 },
];

const Handles: FC<{ w: number; h: number }> = ({ w, h }) => {
  const xs = [-4, w / 2 - 6, w - 9];
  const ys = [-4, h / 2 - 6, h - 9];
  return (
    <>
      {ys.map((y, row) =>
        xs.map((x, col) =>
          row === 1 && col === 1 ? null : (
            <span
              key={`${row}-${col}`}
              className="absolute h-[11px] w-[11px] border border-white bg-black"
              style={{ left: Math.round(x), top: Math.round(y) }}
            />
          ),
        ),
      )}
    </>
  );
};

const NodeCard: FC<{ node: ConstraintNode }> = ({ node }) => {
  const big = Boolean(node.result);
  const w = big ? 176 : 99;
  const h = big ? 411 : 85;
  return (
    <div
      className="absolute bg-[repeating-conic-gradient(#5e5e5e_0_25%,#b0b0b0_0_50%)] bg-[length:3px_3px] p-2"
      style={{ left: node.x, top: 236, width: w, height: h }}
    >
      <div className="relative flex h-full flex-col overflow-hidden border border-[#2b2b1c] bg-[#f0e68c] text-center">
        <span className="absolute left-0 top-0 h-1 w-1 bg-black" />
        <div className="flex h-6 flex-col justify-between border-b border-[#4a4730] py-px">
          <span>&lt;&lt;constraint&gt;&gt;</span>
          <span>{node.name}</span>
        </div>
        <div
          className={`flex flex-col justify-between px-[3px] pt-0.5 text-left ${big ? 'h-[96px] border-b-2 border-[#8a845a] pb-1' : 'h-[23px] border-b border-[#4a4730]'}`}
        >
          <span className="text-center">constraints</span>
          {node.constraints.map((line) => (
            <span key={line}>{line}</span>
          ))}
        </div>
        <div className={`flex flex-col justify-between px-[3px] pt-0.5 text-left ${big ? 'h-[171px]' : 'h-[20px]'}`}>
          <span className="text-center">parameters</span>
          {node.parameters.map((line) => (
            <span key={line} className="flex justify-between">
              {line}
              {!big && <span>...</span>}
            </span>
          ))}
        </div>
        {big && (
          <div className="mt-2 border-t border-dotted border-[#8a845a] px-[3px] pt-[3px] text-left">{node.result}</div>
        )}
      </div>
      <Handles w={w} h={h} />
    </div>
  );
};

const Knob: FC<{ x: number; y: number; d: string; filled?: boolean }> = ({ x, y, d, filled }) => (
  <g transform={`translate(${x} ${y})`}>
    <circle r="13" fill="url(#knob)" stroke="#a8a8a8" strokeWidth="2.5" />
    <path d={d} fill={filled ? '#fff' : 'none'} stroke="#fff" strokeWidth={filled ? 1 : 3} />
  </g>
);

const DiagramCanvas = () => (
  <div className="relative min-w-0 flex-1 overflow-hidden border-l-2 border-t-2 border-[#bdbdbd] bg-white text-[8px] leading-[10px] text-[#2b2b22]">
    <svg width="1226" height="770" viewBox="0 0 1226 770" fill="none" className="absolute left-0 top-0" aria-hidden="true">
      <g opacity="0.8">
        <Knob x={56} y={86} d="M-4-3l4 6 4-6z" filled />
      </g>
      <path d="M30 654h1168v41H30z" fill="#f4f4f4" />
      <path d="M30 74.5h1168v620.5H30z" stroke="#222" strokeWidth="1.5" />
      <path d="M30 75h1168" stroke="#444" strokeWidth="2.5" />
      <path d="M30 95h120l6-11V75" stroke="#444" />
      <path d="M30 655h1168" stroke="#6e6e6e" strokeWidth="2" />
      <path d="M420 655v40" stroke="#333" strokeWidth="1.5" />
      <path d="M690 192v37" stroke="#333" strokeWidth="1.5" />
      <path d="M125 236v-7h974v7" stroke="#555" />
      <path d="M323 229.5h499" stroke="#333" strokeWidth="2" />
      {links.map((link) => (
        <path key={link.x} d={`M${link.x} 229v8`} stroke="#444" />
      ))}
      <rect x="648" y="123" width="84" height="69" rx="2" fill="#f0e68c" stroke="#2b2b1c" strokeWidth="2" />
      <g fontSize="8" fill="#444" fontFamily="Open Sans, sans-serif">
        <text x="33" y="88">bdd [Constraint] Drone Design</text>
        <text x="33" y="669">Project:</text>
        <text x="225" y="685" textAnchor="middle">1) Standalone Video Drone System Model</text>
        <text x="423" y="669">Organization:</text>
        <text x="809" y="685" textAnchor="middle">Zuken</text>
        <text x="690" y="161" textAnchor="middle">Drone Design</text>
        {links.map((link) => (
          <g key={link.name}>
            <text x={link.nameX} y="238">{link.name}</text>
            <text x={link.labelX} y="238">&lt;&lt;constrained by&gt;&gt;</text>
          </g>
        ))}
      </g>
    </svg>
    {nodes.map((node) => (
      <NodeCard key={node.x} node={node} />
    ))}
    <svg width="90" height="370" viewBox="0 0 90 370" fill="none" className="absolute left-3 top-3" aria-hidden="true">
      <Knob x={44} y={15} d="M-4 3l4-6 4 6z" filled />
      <Knob x={15} y={45} d="M3-5l-6 5 6 5z" filled />
      <Knob x={44} y={45} d="M-5-6L5 6M5-6L-5 6" />
      <Knob x={74} y={45} d="M-3-5l6 5-6 5z" filled />
      <Knob x={44} y={114} d="M-6 1H6M0-5V7" />
      <rect x="41.5" y="140.5" width="7" height="180" fill="#fff" fillOpacity="0.3" stroke="#ddd" strokeOpacity="0.5" />
      <rect x="33.5" y="234.5" width="27" height="18" fill="#f3ecc0" fillOpacity="0.4" stroke="#d9cf90" />
      <circle cx="45" cy="330" r="13" fill="#8a8560" fillOpacity="0.5" stroke="#7a7650" strokeWidth="2" strokeOpacity="0.5" />
    </svg>
  </div>
);

/* ---------- toolbox ---------- */

const InsertIcon = () => (
  <Icon w={58} h={58}>
    <path d="M30 12h16v22M16 24v10M26 43h8" stroke="#444" strokeWidth="3" />
    <path d="M8 1l22 4v22L8 22z" fill="#2d62a3" stroke="#1d2f45" strokeWidth="2" />
    <path d="M12 6l14 3v14l-14-4z" fill="#dde9f7" />
    <path d="M2 30l24 4v22L3 52z" fill="#57a830" stroke="#274d17" strokeWidth="2" />
    <path d="M7 36l14 2v13L7 48z" fill="#eaf5e3" />
    <path d="M34 28l22 4v20l-22-3z" fill="#d43434" stroke="#5a1919" strokeWidth="2" />
    <path d="M38 33l14 2v12l-14-2z" fill="#fbe3e3" />
  </Icon>
);

const ShapesIcon = () => (
  <Icon w={48} h={50}>
    <circle cx="31" cy="17" r="15" fill="#f4ec98" stroke="#777341" strokeWidth="2" />
    <path d="M2 10h26v26H2z" fill="#f4ec98" stroke="#777341" strokeWidth="2" />
    <path d="M22 20l14 14-14 14L9 34z" fill="#f4ec98" stroke="#777341" strokeWidth="2" />
  </Icon>
);

const FolderStackIcon: FC<{ double?: boolean }> = ({ double }) => (
  <Icon w={54} h={52}>
    <path d="M1 9l4-4 23 3 4-6 14 1 2 5v35L26 20z" fill="#fbdb1d" stroke="#e09a10" />
    <path d="M1 9l22 3 4 6 17 2 4 5v22l-12 2L4 42z" fill="url(#folder)" stroke="#d67a00" />
    <path d="M7 15l14 3v7L7 22z" fill="#fff" />
    {double && <Drum x={34} y={34} w={19} h={15} />}
    <Drum x={double ? 21 : 32} y={double ? 30 : 33} w={20} h={16} />
  </Icon>
);

const miniBoxes = [
  [15, 80, 66, 160],
  [95, 80, 66, 160],
  [196, 80, 66, 160],
  [313, 80, 34, 29],
  [354, 80, 35, 29],
  [424, 80, 35, 29],
  [258, 31, 35, 29],
];

const toolboxItems = [
  { name: 'New Constraint Definition', icon: <ConstraintIcon add /> },
  { name: 'Constraint Definitions', icon: <ConstraintIcon /> },
  { name: 'New Parameter', icon: <ParameterIcon add /> },
  { name: 'Parameters', icon: <ParameterIcon /> },
];

const Toolbox = () => (
  <aside className="mb-1 ml-1.5 mr-1 mt-1.5 flex w-[634px] shrink-0 flex-col border-2 border-[#b5b5b5] bg-white px-0.5 pb-0.5 pt-1">
    <PanelHeader title="Toolbox" />
    <div className="flex h-[274px] shrink-0 justify-center">
      <div className="w-[492px] border-x-2 border-[#b5b5b5] bg-[#efefef]">
        <svg width="488" height="274" viewBox="1 1 488 274" fill="none" aria-hidden="true">
          <path d="M48 81v-6h394v6M128 75v6M229 75v6M330 75v6M371 75v6M275.5 60v15" stroke="#8f8f8f" />
          {miniBoxes.map(([x, y, w, h]) => (
            <rect key={x} x={x} y={y} width={w} height={h} fill="#929292" />
          ))}
        </svg>
      </div>
    </div>
    <div className="h-2 shrink-0 bg-[#e4e4e4]" />
    <div className="flex h-[41px] shrink-0 items-end text-[20px]" role="tablist">
      <button role="tab" aria-selected="true" className="h-[41px] w-[82px] border-l-2 border-t-2 border-[#b9b9b9] bg-white">
        Insert
      </button>
      <button role="tab" className="h-[38px] w-[117px] border-2 border-[#b9b9b9] bg-linear-to-b from-[#f0f0f0] to-[#e5e5e5]">
        Properties
      </button>
      <div className="flex-1 self-stretch border-b-2 border-[#b9b9b9]" />
    </div>
    <div className="flex min-h-0 flex-1 flex-col overflow-hidden border-x-2 border-b-2 border-[#b9b9b9]">
      <div className="flex shrink-0 items-center gap-3 pl-0.5 pt-1">
        <IconButton label="Entities" className="h-[60px] w-[58px] bg-[#c2dcf5]">
          <InsertIcon />
        </IconButton>
        <IconButton label="Shapes" className="h-[60px] w-[50px]">
          <ShapesIcon />
        </IconButton>
        <IconButton label="Folder" className="h-[60px] w-[54px]">
          <FolderStackIcon />
        </IconButton>
        <IconButton label="Folders" className="h-[60px] w-[54px]">
          <FolderStackIcon double />
        </IconButton>
      </div>
      <div className="mr-1 mt-[26px] flex min-h-0 flex-1 pb-0.5">
        <ul className="flex-1 overflow-hidden">
          {toolboxItems.map((item) => (
            <li key={item.name} className="flex h-[77px] items-center gap-2.5 pl-[25px]">
              {item.icon}
              {item.name}
            </li>
          ))}
        </ul>
        <VerticalScroll thumb="h-[223px]" />
      </div>
    </div>
  </aside>
);

/* ---------- view tabs ---------- */

interface TabGlyphProps {
  lines: string;
  boxes: number[][];
  color?: string;
  children?: ReactNode;
}

const TabGlyph: FC<TabGlyphProps> = ({ lines, boxes, color = '#3f74c8', children }) => (
  <Icon w={28} h={29}>
    <path d={lines} stroke={color} strokeWidth="2" />
    {boxes.map(([x, y, w, h]) => (
      <Box key={`${x}-${y}`} x={x} y={y} w={w} h={h} />
    ))}
    {children}
  </Icon>
);

const redLetters = (text: string) => (
  <text x="0" y="28" fontSize="13" fontWeight="800" fill="#9c2328" fontFamily="Open Sans, sans-serif">
    {text}
  </text>
);

const topTabs = [
  {
    name: 'Properties',
    icon: (
      <Icon w={30} h={30}>
        <rect x="1" y="6" width="25" height="23" fill="#eef4fb" stroke="#5d83b3" strokeWidth="1.5" />
        <path d="M4 14h4m2 0h12M4 18h4m2 0h12M4 22h4m2 0h12M4 26h4m2 0h12" stroke="#8eaed2" strokeWidth="1.5" />
        <path d="M9 4l10-3 6 1v10l-6-1-9-3z" fill="#c99a2e" stroke="#8b6716" />
        <path d="M25 1h4v12h-4z" fill="#2f9e3c" />
      </Icon>
    ),
  },
  {
    name: 'Spider',
    icon: (
      <TabGlyph
        lines="M8 5l6 8M21 5l-7 10M4 16h20M14 15l-5 9M14 15l8 9"
        boxes={[
          [4, 1, 8, 7],
          [18, 2, 8, 7],
          [0, 12, 7, 7],
          [10, 11, 9, 8],
          [20, 12, 7, 7],
          [3, 21, 8, 7],
          [17, 21, 9, 8],
        ]}
      />
    ),
  },
  {
    name: 'Hierarchy',
    icon: <TabGlyph lines="M12 8v6M6 22v-8h12v8" boxes={[[8, 2, 8, 8], [2, 20, 8, 8], [14, 20, 8, 8]]} />,
  },
  {
    name: 'BDD',
    icon: <TabGlyph lines="M14 8v7M6 20v-5h16v5M10 14l4-4 4 4z" boxes={[[4, 1, 20, 9], [2, 19, 10, 9], [16, 19, 10, 9]]} />,
  },
  {
    name: 'Constraint BDD',
    icon: (
      <TabGlyph
        color="#333"
        lines="M14 4L4 14v12h20V14zM8 16l6 5 6-5M14 20v7"
        boxes={[[10, 1, 8, 6], [2, 11, 8, 7], [18, 11, 8, 7], [1, 22, 9, 7], [18, 22, 9, 7]]}
      />
    ),
  },
  {
    name: 'Physical N2',
    icon: (
      <TabGlyph
        lines="M10 4h13v20H10M5 8v8M14 14h9"
        boxes={[[1, 1, 9, 7], [10, 10, 10, 8], [21, 2, 6, 6], [21, 12, 6, 5], [19, 20, 8, 8]]}
      >
        {redLetters('P')}
      </TabGlyph>
    ),
  },
  {
    name: 'Physical Block',
    icon: (
      <TabGlyph
        lines="M3 8v13M25 8v13M7 8l7 6 7-6M14 14v10H9"
        boxes={[[1, 1, 9, 8], [18, 1, 9, 8], [10, 11, 8, 8], [1, 20, 9, 8], [18, 20, 9, 8]]}
      />
    ),
  },
  {
    name: 'Flow Internal Block',
    icon: (
      <TabGlyph
        lines="M16 7H8v14h8M12 4v6M12 18v6"
        boxes={[[16, 2, 9, 9], [16, 16, 9, 10], [2, 6, 5, 6], [2, 12, 5, 5], [3, 17, 5, 6]]}
      />
    ),
  },
];

const bottomTabs = [
  {
    name: 'Class',
    icon: (
      <TabGlyph color="#333" lines="M10 5h12v18M8 8v8h10v6" boxes={[[1, 1, 11, 9], [18, 1, 9, 8], [4, 19, 9, 9], [18, 19, 9, 9]]} />
    ),
  },
  {
    name: 'State Transition',
    icon: <TabGlyph lines="M10 3c9-2 14 3 15 9M4 9c-4 9 1 16 8 17M24 18c-2 6-6 8-9 8" boxes={[[2, 1, 9, 8], [18, 10, 9, 8], [8, 20, 9, 8]]} />,
  },
  {
    name: 'EFFBD',
    icon: (
      <TabGlyph lines="M5 14h18M14 4v20M9 7v14h10V7z" boxes={[[0, 11, 7, 7], [21, 11, 7, 7], [11, 1, 7, 6], [11, 22, 7, 6]]}>
        <circle cx="14" cy="14" r="3.5" fill="#e02626" />
      </TabGlyph>
    ),
  },
  {
    name: 'Activity',
    icon: <TabGlyph lines="M10 4H4v9h6M11 16v6" boxes={[[8, 2, 8, 6], [8, 11, 8, 7], [8, 21, 8, 7]]} />,
  },
  {
    name: 'Sequence',
    icon: (
      <TabGlyph
        lines="M4 8v16M14 8v14M24 8v16M5 12h7M5 23h19"
        boxes={[
          [1, 0, 7, 6],
          [12, 0, 6, 5],
          [22, 0, 6, 6],
          [1, 10, 6, 7],
          [12, 13, 7, 7],
          [21, 17, 7, 7],
          [1, 20, 7, 7],
        ]}
      />
    ),
  },
  {
    name: 'N2',
    icon: (
      <TabGlyph
        lines="M8 4h16M4 8v16h14M24 6v16M14 13h8"
        boxes={[[1, 1, 8, 8], [10, 10, 9, 8], [21, 4, 6, 6], [2, 22, 6, 6], [18, 20, 9, 8]]}
      />
    ),
  },
  {
    name: 'IDEF0',
    icon: (
      <TabGlyph
        lines="M8 3h8v8M3 8v17h22M8 8v10h12M24 0v10l-3-3M27 8h-9M27 20v9"
        boxes={[[1, 0, 8, 8], [11, 9, 8, 8], [20, 18, 8, 8]]}
      />
    ),
  },
  {
    name: 'IDEF0 A-0',
    icon: (
      <TabGlyph lines="M8 3h7v8M4 8v8M25 0v9h-7M27 14h-9M24 20v9" boxes={[[1, 0, 8, 8], [11, 8, 8, 8], [20, 17, 8, 8]]}>
        {redLetters('A0')}
      </TabGlyph>
    ),
  },
];

const tabBackground = (name: string) => {
  if (name === 'Constraint BDD') return 'border-t-0 bg-white pt-1';
  if (name === 'Properties') return 'bg-[#f8f8f8]';
  return 'bg-linear-to-b from-[#f0f0f0] to-[#e5e5e5]';
};

const TabRow: FC<{ tabs: typeof topTabs; className: string }> = ({ tabs, className }) => (
  <div className={`grid h-[37px] ${className}`} role="tablist">
    {tabs.map((tab) => (
      <button
        key={tab.name}
        role="tab"
        aria-selected={tab.name === 'Constraint BDD'}
        className={`-mr-0.5 flex items-center justify-center gap-0.5 overflow-hidden whitespace-nowrap border-2 border-[#b4b4b4] ${tabBackground(tab.name)}`}
      >
        {tab.icon}
        {tab.name}
      </button>
    ))}
  </div>
);

const ViewTabs = () => (
  <div className="shrink-0 border-b-2 border-[#d0d0d0] bg-[#f7f7f7] pb-0.5 pl-1 pr-1 pt-0.5 text-[20px]">
    <TabRow tabs={topTabs} className="grid-cols-[222fr_187fr_215fr_165fr_279fr_231fr_259fr_307fr]" />
    <TabRow tabs={bottomTabs} className="grid-cols-[206fr_306fr_219fr_229fr_251fr_187fr_212fr_255fr]" />
  </div>
);

const StatusBar = () => (
  <footer className="flex h-[38px] shrink-0 items-center whitespace-nowrap bg-[#efefef] pl-1.5 pt-2 [&>span]:h-[30px] [&>span]:pr-2.5 [&>span+span]:border-l-2 [&>span+span]:border-[#555] [&>span+span]:pl-2.5">
    <span>Repository: Local</span>
    <span>Project: 1) Standalone Video Drone System Model</span>
    <span>Username: Administrator</span>
    <span>Authentication Mode: GENESYS</span>
  </footer>
);

export default function App() {
  return (
    <div className="flex h-screen flex-col overflow-hidden border-l-2 border-[#2a579a] bg-[#efefef] font-['Open_Sans',sans-serif] text-[21px] leading-[30px] text-[#222]">
      <Gradients />
      <TitleBar />
      <Ribbon />
      <main className="flex min-h-0 flex-1 pt-px">
        <div className="flex w-[463px] shrink-0 flex-col gap-2 pb-0.5 pl-px">
          <ProjectExplorer />
          <Browser />
        </div>
        <div className="ml-[7px] flex min-w-0 flex-1 flex-col">
          <h2 className="h-[41px] shrink-0 bg-[#2a579a] pl-[7px] pt-1.5 font-bold text-white">Drone Design asConstBDD</h2>
          <div className="flex min-h-0 flex-1 pt-px">
            <DiagramCanvas />
            <Toolbox />
          </div>
          <ViewTabs />
        </div>
      </main>
      <StatusBar />
    </div>
  );
}
